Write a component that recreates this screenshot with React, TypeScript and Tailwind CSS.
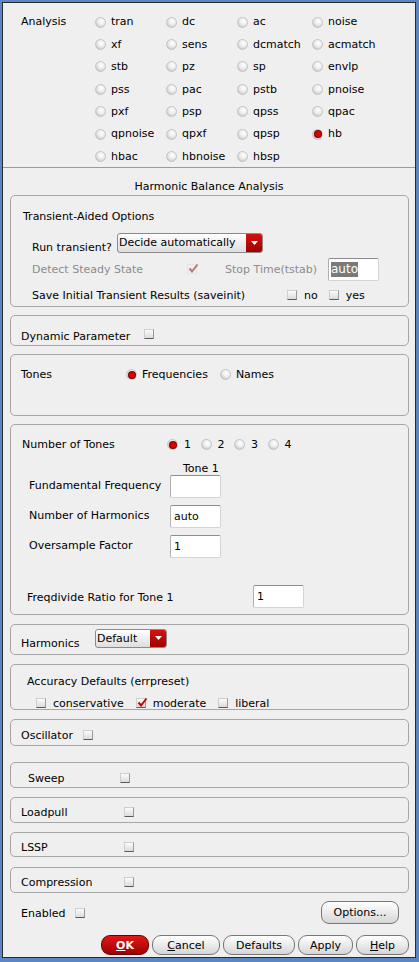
import React from "react";

function Radio({ checked = false }: { checked?: boolean }) {
  return (
    <span className="relative inline-block w-[11px] h-[11px] shrink-0 rounded-full border border-[#c4c4c4] bg-[radial-gradient(circle_at_60%_35%,#ffffff_0%,#ececec_45%,#b4b4b4_100%)]">
      {checked && (
        <span className="absolute left-[1.5px] top-[1.5px] w-[6px] h-[6px] rounded-full bg-[#d80000] shadow-[0_0_0_1px_#7a0000]" />
      )}
    </span>
  );
}

function Check({ checked = false, disabled = false }: { checked?: boolean; disabled?: boolean }) {
  return (
    <span
      className={
        "relative inline-block w-[10px] h-[10px] shrink-0 border " +
        (disabled
          ? "border-[#e4e4e4] bg-[#efefef]"
          : "border-[#cfcfcf] border-b-[#5a5a5a] border-r-[#9a9a9a] bg-[linear-gradient(to_bottom,#fbfbfb,#dcdcdc)]")
      }
    >
      {checked && (
        <svg
          className="absolute left-[0px] top-[-2px]"
          width="11"
          height="11"
          viewBox="0 0 11 11"
        >
          <path
            d="M1.5 5.5 L4 8.5 L9.5 1.5"
            fill="none"
            stroke={disabled ? "#b77878" : "#cc0000"}
            strokeWidth="2"
          />
        </svg>
      )}
    </span>
  );
}

function Dropdown({ text, width }: { text: string; width: string }) {
  return (
    <div
      className={
        "flex rounded-[3px] border border-[#8a8a8a] overflow-hidden bg-[linear-gradient(to_bottom,#ffffff,#dedede)] " +
        width
      }
    >
      <span className="flex-1 pl-[1px] flex items-center text-[11px] leading-none whitespace-nowrap">{text}</span>
      <span className="w-[16px] flex items-center justify-center bg-[linear-gradient(to_bottom,#d81010,#9e0000)]">
        <svg width="7" height="4" viewBox="0 0 7 4">
          <path d="M0 0 L7 0 L3.5 4 Z" fill="#ffffff" />
        </svg>
      </span>
    </div>
  );
}

function Input({ value = "", w = "w-[51px]", selected = false }: { value?: string; w?: string; selected?: boolean }) {
  return (
    <div
      className={
        "h-[23px] rounded-[2px] border border-[#d4d4d4] border-t-[#8c8c8c] border-l-[#b0b0b0] bg-white flex items-center pl-[2px] " +
        w
      }
    >
      {selected ? (
        <span className="bg-[#7a7a7a] text-white text-[12px] leading-[15px] px-[0px]">{value}</span>
      ) : (
        <span className="pl-[1px] pt-[1px] text-[11px] leading-none">{value}</span>
      )}
    </div>
  );
}

function Panel({ h, mt, children, className = "" }: { h: string; mt: string; children?: React.ReactNode; className?: string }) {
  return (
    <div className={"ml-[7px] mr-[6px] rounded-[5px] border border-[#a6a6a6] " + h + " " + mt + " " + className}>
      {children}
    </div>
  );
}

function Btn({ children, w, red = false }: { children: React.ReactNode; w: string; red?: boolean }) {
  return (
    <div
      className={
        "h-[20px] pt-[2px] rounded-[9px] border flex items-center justify-center leading-none " +
        w +
        (red
          ? " border-[#6a0000] bg-[linear-gradient(to_bottom,#e01818,#a00000)] text-white font-bold"
          : " border-[#777777] bg-[linear-gradient(to_bottom,#ffffff,#d6d6d6)]")
      }
    >
      {children}
    </div>
  );
}

const analyses: [string, boolean][] = [
  ["tran", false], ["dc", false], ["ac", false], ["noise", false],
  ["xf", false], ["sens", false], ["dcmatch", false], ["acmatch", false],
  ["stb", false], ["pz", false], ["sp", false], ["envlp", false],
  ["pss", false], ["pac", false], ["pstb", false], ["pnoise", false],
  ["pxf", false], ["psp", false], ["qpss", false], ["qpac", false],
  ["qpnoise", false], ["qpxf", false], ["qpsp", false], ["hb", true],
  ["hbac", false], ["hbnoise", false], ["hbsp", false],
];

function SimplePanel({ label, labelW, pl, h, mt, pt }: { label: string; labelW: string; pl: string; h: string; mt: string; pt: string }) {
  return (
    <Panel h={h} mt={mt} className={pt}>
      <div className={"h-[14px] flex items-center " + pl}>
        <span className={"pt-[4px] " + labelW}>{label}</span>
        <Check />
      </div>
    </Panel>
  );
}

export default function App() {
  return (
    <div className="w-[419px] h-[962px] bg-[#5b86c2] pl-[2px] pt-[2px] pr-[3px] pb-[4px] font-['DejaVu_Sans',sans-serif] text-[11px] text-black">
      <div className="h-full border border-[#2a2a2a] bg-[#efefef] flex flex-col">
        {/* Analysis grid */}
        <div className="mt-[8px] pl-[18px] flex">
          <div className="w-[74px] h-[22.4px] pt-[1px] flex items-center">Analysis</div>
          <div className="grid grid-cols-[71px_71px_75px_80px] auto-rows-[22.4px]">
            {analyses.map(([n, c]) => (
              <div key={n} className="flex items-center gap-[5px]">
                <Radio checked={c} />
                <span className="pt-[1px]">{n}</span>
              </div>
            ))}
          </div>
        </div>
        <div className="-mt-[1px] border-t border-[#9c9c9c]" />

        <div className="h-[27px] pt-[12px] flex items-center justify-center">Harmonic Balance Analysis</div>

        {/* Transient panel */}
        <Panel h="h-[112px]" mt="mt-[0px]" className="pt-[13px]">
          <div className="h-[14px] pl-[12px] pt-[4px] flex items-center">Transient-Aided Options</div>
          <div className="mt-[10px] h-[20px] pl-[21px] flex items-end">
            <span className="w-[85px] leading-[14px] -mb-[2px]">Run transient?</span>
            <Dropdown text="Decide automatically" width="w-[146px] h-[20px]" />
          </div>
          <div className="mt-[5px] h-[23px] pl-[21px] flex items-center">
            <span className="w-[155px] pt-[3px] text-[#8c8c8c]">Detect Steady State</span>
            <Check checked disabled />
            <span className="ml-[28px] w-[103px] pt-[2px] text-[#8c8c8c]">Stop Time(tstab)</span>
            <Input value="auto" selected />
          </div>
          <div className="mt-[7px] h-[14px] pl-[21px] flex items-center">
            <span className="w-[255px] pt-[4px]">Save Initial Transient Results (saveinit)</span>
            <Check />
            <span className="ml-[7px] pt-[3px]">no</span>
            <span className="ml-[11px] flex"><Check /></span>
            <span className="ml-[7px] pt-[3px]">yes</span>
          </div>
        </Panel>

        {/* Dynamic parameter */}
        <Panel h="h-[31px]" mt="mt-[8px]" className="pt-[13px]">
          <div className="h-[14px] pl-[10px] flex items-center">
            <span className="w-[123px] pt-[4px]">Dynamic Parameter</span>
            <span className="-mt-[3px] flex"><Check /></span>
          </div>
        </Panel>

        {/* Tones */}
        <Panel h="h-[62px]" mt="mt-[8px]" className="pt-[13px]">
          <div className="h-[14px] pl-[10px] flex items-center">
            <span className="w-[105px] pt-[2px]">Tones</span>
            <span className="flex items-center gap-[5px]"><Radio checked /><span className="pt-[2px]">Frequencies</span></span>
            <span className="ml-[12px] flex items-center gap-[5px]"><Radio /><span className="pt-[2px]">Names</span></span>
          </div>
        </Panel>

        {/* Number of tones */}
        <Panel h="h-[191px]" mt="mt-[8px]" className="pt-[13px]">
          <div className="h-[14px] pl-[11px] flex items-center">
            <span className="w-[145px] pt-[2px]">Number of Tones</span>
            {["1", "2", "3", "4"].map((t, i) => (
              <span key={t} className="w-[33.5px] flex items-center gap-[6px]">
                <Radio checked={i === 0} />
                <span className="pt-[2px]">{t}</span>
              </span>
            ))}
          </div>
          <div className="mt-[9px] h-[14px] pl-[172px] pt-[3px] flex items-center">Tone 1</div>
          <div className="h-[23px] pl-[18px] flex items-center">
            <span className="w-[141px] pt-[1px]">Fundamental Frequency</span>
            <Input />
          </div>
          <div className="mt-[7px] h-[23px] pl-[18px] flex items-center">
            <span className="w-[141px] pt-[1px]">Number of Harmonics</span>
            <Input value="auto" />
          </div>
          <div className="mt-[7px] h-[23px] pl-[18px] flex items-center">
            <span className="w-[141px] pt-[1px]">Oversample Factor</span>
            <Input value="1" />
          </div>
          <div className="mt-[27px] h-[23px] pl-[16px] flex items-center">
            <span className="w-[226px] pt-[4px]">Freqdivide Ratio for Tone 1</span>
            <Input value="1" />
          </div>
        </Panel>

        {/* Harmonics */}
        <Panel h="h-[31px]" mt="mt-[9px]" className="pt-[4px]">
          <div className="pl-[10px] flex items-start">
            <span className="w-[74px] mt-[8px] h-[14px] pt-[2px] flex items-center">Harmonics</span>
            <Dropdown text="Default" width="w-[72px] h-[19px]" />
          </div>
        </Panel>

        {/* Accuracy */}
        <Panel h="h-[46px]" mt="mt-[9px]" className="pt-[9px]">
          <div className="h-[14px] pl-[16px] pt-[4px] flex items-center">Accuracy Defaults (errpreset)</div>
          <div className="mt-[8px] h-[14px] pl-[25px] flex items-center">
            <span className="flex items-center gap-[7px]"><Check /><span className="pt-[4px]">conservative</span></span>
            <span className="ml-[12px] flex items-center gap-[7px]"><Check checked /><span className="pt-[4px]">moderate</span></span>
            <span className="ml-[12px] flex items-center gap-[7px]"><Check /><span className="pt-[4px]">liberal</span></span>
          </div>
        </Panel>

        <SimplePanel label="Oscillator" labelW="w-[62px]" pl="pl-[10px]" h="h-[27px]" mt="mt-[9px]" pt="pt-[8px]" />
        <SimplePanel label="Sweep" labelW="w-[92px]" pl="pl-[17px]" h="h-[26px]" mt="mt-[16px]" pt="pt-[8px]" />
        <SimplePanel label="Loadpull" labelW="w-[103px]" pl="pl-[10px]" h="h-[26px]" mt="mt-[9px]" pt="pt-[7px]" />
        <SimplePanel label="LSSP" labelW="w-[103px]" pl="pl-[10px]" h="h-[25px]" mt="mt-[9px]" pt="pt-[7px]" />
        <SimplePanel label="Compression" labelW="w-[103px]" pl="pl-[10px]" h="h-[26px]" mt="mt-[10px]" pt="pt-[7px]" />

        {/* Enabled + Options */}
        <div className="mt-[8px] h-[23px] pl-[18px] pr-[16px] flex items-center">
          <span className="w-[54px] pt-[5px]">Enabled</span>
          <span className="pt-[2px] flex"><Check /></span>
          <div className="ml-auto w-[78px] h-[23px] pt-[3px] rounded-[8px] border border-[#777777] bg-[linear-gradient(to_bottom,#ffffff,#d6d6d6)] flex items-center justify-center">
            Options...
          </div>
        </div>

        {/* Bottom buttons */}
        <div className="mt-[11px] pr-[6px] flex justify-end gap-[3px]">
          <Btn w="w-[48px]" red>
            <span><span className="underline">O</span>K</span>
          </Btn>
          <Btn w="w-[68px]">
            <span><span className="underline">C</span>ancel</span>
          </Btn>
          <Btn w="w-[72px]">Defaults</Btn>
          <Btn w="w-[55px]">Apply</Btn>
          <Btn w="w-[53px]">
            <span><span className="underline">H</span>elp</span>
          </Btn>
        </div>
      </div>
    </div>
  );
}
